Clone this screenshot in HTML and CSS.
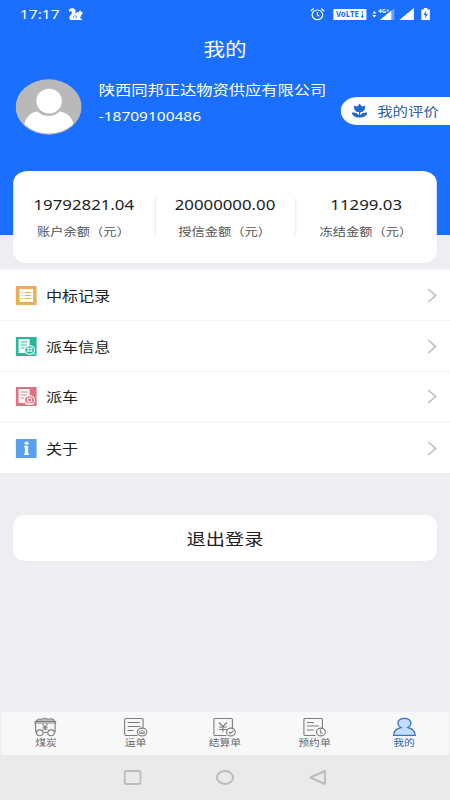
FILE: index.html
```html
<!DOCTYPE html>
<html lang="zh-CN">
<head>
<meta charset="utf-8">
<title>我的</title>
<link rel="stylesheet" href="styles.css">
</head>
<body>
<div class="screen">
  <header class="hero">
    <div class="status">
      <span class="time">17:17</span>
      <svg class="squirrel" viewBox="0 0 16 13" preserveAspectRatio="none"><path d="M.5 2C2-.3 6-.2 7.500 2c1 2.200-1 3.200-.8 4C8 4.500 9.500 4 10.800 4.300L12.500 2l.8 1.500c1.200.3 1.800 1.200 2.200 2.300l-2.300 1.200.8 1.400-1.600.4.500 1.800 1.600.4v1H2.500C.6 11.500.4 9 2 7.300 3.500 6 4 4.500 3.500 3.700 3 2.800 2 3.200.5 3.700z" fill="#fff"/><path d="M4.800 10c0-2.200 2.700-3 3.800-1.600.9 1.300-.8 2.500-1.700 1.500" fill="none" stroke="#1a6fff" stroke-width=".7"/></svg>
      <svg class="signals" viewBox="0 0 124 18" preserveAspectRatio="none">
        <g fill="none" stroke="#fff" stroke-width="1.200"><ellipse cx="9" cy="9.800" rx="5.300" ry="4.800"/><path d="M9 7v3l2 1.200M2.300 6l3-2.500M15.700 6l-3-2.500"/></g>
        <path d="M25 4h33v11H25z" fill="#fff"/>
        <text class="volte" x="27.500" y="12.500" textLength="23" lengthAdjust="spacingAndGlyphs">VoLTE</text>
        <path d="M54 6v2m0 1v4m-1.200-1.500h2.400" stroke="#1a6fff" stroke-width="1"/>
        <path d="M64 8.500l2-2.500 2 2.500zm0 1.500l2 2.500 2-2.500z" fill="#fff"/>
        <path d="M71.500 15L83 5.500V15z" fill="#fff"/><path d="M83 5.500l3-2V15h-3z" fill="#fff" opacity=".35"/>
        <text class="net" x="70" y="7.600" textLength="11" lengthAdjust="spacingAndGlyphs">4G+</text>
        <path d="M91 15L105.500 3v12zM113 4.500h2.500V3h3.500v1.500h2.500V15H113z" fill="#fff"/>
        <path d="M118 5.500l-3 4.500h2l-.8 3.500 3.500-4.500h-2.200z" fill="#1a6fff"/>
      </svg>
    </div>
    <h1 class="title">我的</h1>
    <div class="profile">
      <svg class="avatar" viewBox="0 0 66 56" preserveAspectRatio="none">
        <defs><clipPath id="face"><ellipse cx="33" cy="28" rx="32" ry="26.500"/></clipPath></defs>
        <ellipse cx="33" cy="28" rx="33" ry="27.700" fill="#b9b9ba"/>
        <g clip-path="url(#face)" fill="#fff"><path d="M8 48C10 38 15 33 22 32.500 28 38.500 38 38.500 44 32.500 51 33 56 38 58 45L50 56H16z"/><ellipse cx="33.500" cy="22" rx="12.800" ry="12.300"/></g>
      </svg>
      <div class="who"><div class="company">陕西同邦正达物资供应有限公司</div><div class="phone">-18709100486</div></div>
    </div>
    <div class="review">
      <svg class="flower" viewBox="0 0 16 16" preserveAspectRatio="none"><path d="M2.500 2.500L5.500 3.500 8 .8 10.500 3.500l3-1c.5 4-1.500 6.700-4.900 6.700v3.300C9.500 10.200 12.500 9 15.800 9.500c-.6 3.500-3 5-7.800 5S.8 13 .2 9.500C3.500 9 6.500 10.200 7.400 12.500V9.200C4 9.200 2 6.500 2.500 2.500z" fill="#2467cd"/></svg>
      <span>我的评价</span>
    </div>
  </header>
  <main>
    <section class="balances">
      <div class="balance"><b>19792821.04</b><span>账户余额（元）</span></div>
      <div class="balance"><b>20000000.00</b><span>授信金额（元）</span></div>
      <div class="balance"><b>11299.03</b><span>冻结金额（元）</span></div>
    </section>
    <nav class="menu">
      <a class="row"><svg class="ico" viewBox="0 0 21 19" preserveAspectRatio="none"><path d="M0 0h21v19H0z" fill="#e8ae5c"/><path d="M4 3h13.500v13H4z" fill="#fff"/><path d="M6 6.500h1.500M9 6.500h6.500M6 9.500h1.500M9 9.500h6.500M6 12.500h1.500M9 12.500h6.500" stroke="#e8ae5c"/></svg><span>中标记录</span><svg class="arrow" viewBox="0 0 10 15" preserveAspectRatio="none"><path d="M1 1l7.500 6.500L1 14"/></svg></a>
      <a class="row"><svg class="ico" viewBox="0 0 21 19" preserveAspectRatio="none"><path d="M0 0h21v19H0z" fill="#25b99a"/><path d="M3 2h11v14H3z" fill="#fff"/><path d="M5 5h7M5 8h6M5 11h4" stroke="#25b99a"/><ellipse cx="14" cy="13" rx="5" ry="4.300" fill="#25b99a" stroke="#fff"/><path d="M11 11.500h6M11 14h6M12.500 10v5M15.500 10v5M17.500 16l2.500 2" stroke="#fff" fill="none" stroke-width=".9"/></svg><span>派车信息</span><svg class="arrow" viewBox="0 0 10 15" preserveAspectRatio="none"><path d="M1 1l7.500 6.500L1 14"/></svg></a>
      <a class="row"><svg class="ico" viewBox="0 0 21 19" preserveAspectRatio="none"><path d="M0 0h21v19H0z" fill="#df7180"/><path d="M3 2h11v14H3z" fill="#fff"/><path d="M5 5h7M5 8h6M5 11h4" stroke="#df7180"/><ellipse cx="14" cy="13" rx="5" ry="4.300" fill="#df7180" stroke="#fff"/><ellipse cx="14" cy="13" rx="2.200" ry="1.900" fill="none" stroke="#fff"/><path d="M9.500 17h9" stroke="#fff"/></svg><span>派车</span><svg class="arrow" viewBox="0 0 10 15" preserveAspectRatio="none"><path d="M1 1l7.500 6.500L1 14"/></svg></a>
      <a class="row"><svg class="ico" viewBox="0 0 21 19" preserveAspectRatio="none"><path d="M0 0h21v19H0z" fill="#58a0ee"/><path d="M8.500 6.700h4V14.500H13.500v1.500H8.500v-1.500H9.300V8.200h-.8z" fill="#fff"/><ellipse cx="11" cy="4.200" rx="2" ry="1.600" fill="#fff"/></svg><span>关于</span><svg class="arrow" viewBox="0 0 10 15" preserveAspectRatio="none"><path d="M1 1l7.500 6.500L1 14"/></svg></a>
    </nav>
    <button class="logout">退出登录</button>
  </main>
  <footer class="tabs">
    <a class="tab"><svg viewBox="0 0 24 20" preserveAspectRatio="none"><path class="coal" d="M2.500 4.500C3.500 2 5.500 1.500 7.500 2.500 9.500 1 12 1 14 2.300c3-1.300 6-.5 7 2.200z"/><path d="M1.500 4.500h20.500v1.500H1.500zM2 6v9h1M21.500 6v9h-.5M9.500 15.500h4.500M9 7l2.500 3L14 7M11.500 10v3.500M9 10.200h5M9 12h5"/><ellipse cx="6.200" cy="15.800" rx="3.300" ry="2.900"/><ellipse cx="17.500" cy="15.800" rx="3.300" ry="2.900"/></svg><span>煤炭</span></a>
    <a class="tab"><svg viewBox="0 0 24 20" preserveAspectRatio="none"><path d="M14 18.500H2.500Q1 18.500 1 17V2.500Q1 1.500 2.500 1.500H18Q19.500 1.500 19.500 2.500V11M4 5.500h12M4 9.500h13M4 13.500h6"/><ellipse cx="18.500" cy="15" rx="4.800" ry="3.900"/><path d="M16 16.500v-2h1l.5-1h2l.5 1h1v2zM17 15.500h3" stroke-width=".8"/></svg><span>运单</span></a>
    <a class="tab"><svg viewBox="0 0 24 20" preserveAspectRatio="none"><path d="M14 18.500H2.500Q1.500 18.500 1.500 17V2.500Q1.500 1.500 2.500 1.500H19Q20 1.500 20 2.500V11M6.500 5.500l4 4 4-4M10.500 9.500V15M6.500 10h8M6.500 12.500h8"/><ellipse cx="18.500" cy="15" rx="4.400" ry="3.900"/><path d="M16.500 15l1.500 1.500 3-3"/></svg><span>结算单</span></a>
    <a class="tab"><svg viewBox="0 0 24 20" preserveAspectRatio="none"><path d="M13 18.500H2.500Q1.500 18.500 1.500 17V2.500Q1.500 1.500 2.500 1.500H19Q20 1.500 20 2.500V11M4.500 5.500h7M4.500 9h12M4.500 13h7"/><ellipse cx="18.500" cy="15" rx="4.400" ry="3.900"/><path d="M18 12.500V15.500l2 1"/></svg><span>预约单</span></a>
    <a class="tab active"><svg viewBox="0 0 24 20" preserveAspectRatio="none"><path d="M8.500 10.500C3.500 7.500 5 1.300 12 1.300S20.500 7.500 15.500 10.500C20 11.500 22.500 14 22.800 18.300H1.200C1.500 14 4 11.500 8.500 10.500z"/></svg><span>我的</span></a>
  </footer>
  <div class="system">
    <svg viewBox="0 0 18 15" preserveAspectRatio="none"><rect x="1" y="1" width="16" height="13" rx="2"/></svg>
    <svg viewBox="0 0 18 15" preserveAspectRatio="none"><ellipse cx="9" cy="7.500" rx="8" ry="6.500"/></svg>
    <svg viewBox="0 0 18 15" preserveAspectRatio="none"><path d="M2 7.500L16.500 1v13z"/></svg>
  </div>
</div>
</body>
</html>
```
FILE: styles.css
```css
* { box-sizing: border-box; }
html, body { margin: 0; width: 450px; height: 800px; overflow: hidden; }
.screen {
  width: 375px; height: 800px; display: flex; flex-direction: column;
  transform: scaleX(1.2); transform-origin: 0 0; background: #eeedf2;
  font-family: "Noto Sans", "Noto Sans CJK SC", sans-serif; color: #222;
}
svg { display: block; flex: none; }
.hero { position: relative; height: 235px; flex: none; background: #1a6fff; color: #fff; }
.status { display: flex; height: 30px; padding: 5px 16px 0 16.500px; }
.time { font-size: 13px; line-height: 19px; width: 40px; }
.squirrel { width: 12.500px; height: 13px; margin: 3px 0 0 .5px; }
.signals { width: 103.3px; height: 18px; margin-left: auto; margin-right: -1px; }
.volte { font: bold 8px "Noto Sans", sans-serif; fill: #1a6fff; }
.net { font: bold 6px "Noto Sans", sans-serif; fill: #fff; }
.title { margin: 4px 0 0; text-align: center; font: 400 18px/28px "Noto Sans CJK SC", sans-serif; }
.profile { display: flex; padding: 17px 0 0 13.200px; }
.avatar { width: 55px; height: 56px; }
.who { margin: -1px 0 0 14.100px; }
.company { line-height: 22px; font-family: "Noto Sans CJK SC", sans-serif; font-size: 13.550px; }
.phone { line-height: 22px; margin-top: 5px; font-size: 12.900px; }
.review {
  position: absolute; right: 0; top: 97px; width: 91.500px; height: 28px; padding-left: 9px;
  display: flex; align-items: center; background: #fff; border-radius: 14px 0 0 14px;
  color: #2f62a8; font: 12.900px/28px "Noto Sans CJK SC", sans-serif;
}
.flower { width: 13.3px; height: 16px; margin-right: 8.500px; }
main { flex: 1; }
.balances {
  position: relative; display: flex; margin: -64px 11px 0; height: 92px; padding-top: 22px;
  background: #fff; border-radius: 12px;
}
.balance { flex: 1; text-align: center; }
.balance + .balance { background: linear-gradient(#ececef, #ececef) 0 5px / 1px 37px no-repeat; }
.balance b { display: block; font-weight: 400; font-size: 14px; line-height: 24px; color: #222; }
.balance span { display: block; margin: 4px 0 0 -.5px; font: 11.050px/20px "Noto Sans CJK SC", sans-serif; color: #555; }
.menu { height: 203px; margin-top: 7px; background: #fff; }
.row { display: flex; align-items: center; height: 50.75px; padding: 1px 10.500px 0 13.3px; border-bottom: 1px solid #f5f5f6; }
.row:last-child { border: 0; }
.row span { margin: -1px 0 0 7.500px; flex: 1; font: 13.4px/24px "Noto Sans CJK SC", sans-serif; }
.ico { width: 17.500px; height: 19px; }
.arrow { width: 8.3px; height: 15px; fill: none; stroke: #bbb; stroke-width: 1.600; }
.logout {
  display: block; width: 353px; height: 46px; margin: 42px 11px 0; padding: 0; border: 0;
  border-radius: 10px; background: #fff; color: #222; font: 16px/45px "Noto Sans CJK SC", sans-serif;
}
.tabs { display: flex; flex: none; height: 43px; margin: 0 1px; background: #f8f8f8; }
.tab { flex: 1; display: flex; flex-direction: column; align-items: center; padding-top: 5px; color: #666; font: 9px/12px "Noto Sans CJK SC", sans-serif; }
.tab svg { width: 20px; height: 20px; fill: none; stroke: #7c7c7c; stroke-width: 1.100; }
.tab .coal { fill: #bdbdbd; stroke: #8c8c8c; }
.active { color: #2c66b5; }
.active svg { fill: #c4deff; stroke: #3c73bd; stroke-width: 1.300; }
.system { flex: none; height: 45px; display: flex; justify-content: center; align-items: center; gap: 62px; background: #eaeaea; }
.system svg { width: 15px; height: 15px; fill: none; stroke: #bcbcbc; stroke-width: 2; stroke-linejoin: round; }
```
